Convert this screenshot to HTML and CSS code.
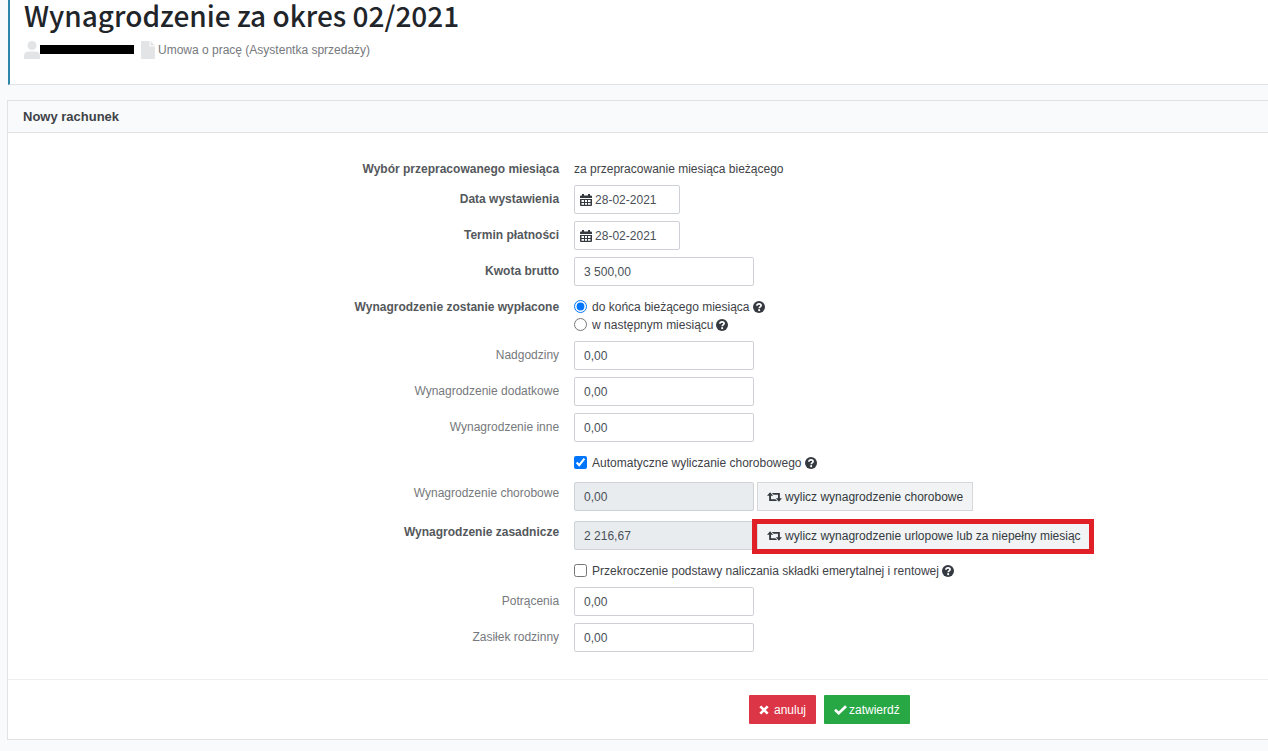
FILE: index.html
```html
<!DOCTYPE html>
<html lang="pl">
<head>
    <meta charset="utf-8">
    <title>Wynagrodzenie za okres 02/2021</title>
    <meta name="viewport" content="width=device-width, initial-scale=1">
    <link rel="stylesheet" href="styles.css">
</head>
<body>
    <!-- icons shared by the form -->
    <svg class="sprite" aria-hidden="true">
        <symbol id="calendar" viewBox="0 0 12 12"><path d="M2 0h2v1.500h4V0h2v1.500h1a1 1 0 0 1 1 1V4H0V2.500a1 1 0 0 1 1-1h1zM0 5h12v6a1 1 0 0 1-1 1H1a1 1 0 0 1-1-1zM1.500 6v2H4V6zM5 6v2h2V6zM8 6v2h2.500V6zM1.500 9v1.700H4V9zM5 9v1.700h2V9zM8 9v1.700h2.500V9z" fill-rule="evenodd"/></symbol>
        <symbol id="help" viewBox="0 0 16 16"><circle cx="8" cy="8" r="8"/><path d="M5.200 6.300C5.300 4.600 6.500 3.800 8.100 3.800c1.600 0 2.700 .9 2.700 2.200 0 1.900-2.500 1.800-2.500 3.600" fill="none" stroke="#fff" stroke-width="2.300"/><circle cx="8.200" cy="12.200" r="1.400" fill="#fff"/></symbol>
        <symbol id="retweet" viewBox="0 0 16 10"><path d="M3.300 0L6.600 3.700H4.300V7.300H9L10.900 9.300H2.300V3.700H0zM12.700 10L9.400 6.300h2.300V2.700H7L5.100 .7h8.600v5.600H16z"/></symbol>
    </svg>

    <header class="page-header">
        <h1>Wynagrodzenie za okres 02/2021</h1>
        <div class="details">
            <svg class="detail-icon" viewBox="0 0 16 18" aria-hidden="true"><circle cx="8" cy="4.500" r="4.500"/><path d="M0 18v-3.500C0 12 2 10.500 4.500 10.500h7c2.500 0 4.500 1.500 4.500 4V18z"/></svg>
            <span class="redacted"></span>
            <svg class="detail-icon file" viewBox="0 0 14 18" aria-hidden="true"><path d="M1 0h7.500v5.500H14V17a1 1 0 0 1-1 1H1a1 1 0 0 1-1-1V1a1 1 0 0 1 1-1zM9.500 0L14 4.500H9.500z"/></svg>
            <span>Umowa o pracę (Asystentka sprzedaży)</span>
        </div>
    </header>

    <form class="card">
        <h2 class="card-title">Nowy rachunek</h2>

        <div class="card-body">
            <div class="row plain">
                <span class="label required">Wybór przepracowanego miesiąca</span>
                <span>za przepracowanie miesiąca bieżącego</span>
            </div>
            <div class="row">
                <label class="label required" for="issued">Data wystawienia</label>
                <div class="date">
                    <svg class="calendar" aria-hidden="true"><use href="#calendar"/></svg>
                    <input type="text" id="issued" value="28-02-2021">
                </div>
            </div>
            <div class="row">
                <label class="label required" for="due">Termin płatności</label>
                <div class="date">
                    <svg class="calendar" aria-hidden="true"><use href="#calendar"/></svg>
                    <input type="text" id="due" value="28-02-2021">
                </div>
            </div>
            <div class="row">
                <label class="label required" for="gross">Kwota brutto</label>
                <input class="field" type="text" id="gross" value="3 500,00">
            </div>
            <div class="row" role="radiogroup" aria-labelledby="payout">
                <span class="label required" id="payout">Wynagrodzenie zostanie wypłacone</span>
                <div class="options">
                    <label class="option"><input type="radio" name="payout" checked>do końca bieżącego miesiąca<svg class="help" aria-hidden="true"><use href="#help"/></svg></label>
                    <label class="option"><input type="radio" name="payout">w następnym miesiącu<svg class="help" aria-hidden="true"><use href="#help"/></svg></label>
                </div>
            </div>
            <div class="row">
                <label class="label" for="overtime">Nadgodziny</label>
                <input class="field" type="text" id="overtime" value="0,00">
            </div>
            <div class="row">
                <label class="label" for="extra">Wynagrodzenie dodatkowe</label>
                <input class="field" type="text" id="extra" value="0,00">
            </div>
            <div class="row">
                <label class="label" for="other">Wynagrodzenie inne</label>
                <input class="field" type="text" id="other" value="0,00">
            </div>
            <div class="row">
                <div class="options sick-auto">
                    <label class="option"><input type="checkbox" checked>Automatyczne wyliczanie chorobowego<svg class="help" aria-hidden="true"><use href="#help"/></svg></label>
                </div>
            </div>
            <div class="row with-button">
                <label class="label" for="sick">Wynagrodzenie chorobowe</label>
                <div class="group">
                    <input class="field" type="text" id="sick" value="0,00" readonly>
                    <button class="calc" type="button"><svg class="retweet" aria-hidden="true"><use href="#retweet"/></svg>wylicz wynagrodzenie chorobowe</button>
                </div>
            </div>
            <div class="row with-button">
                <label class="label required" for="base">Wynagrodzenie zasadnicze</label>
                <div class="group">
                    <input class="field" type="text" id="base" value="2 216,67" readonly>
                    <button class="calc marked" type="button"><svg class="retweet" aria-hidden="true"><use href="#retweet"/></svg>wylicz wynagrodzenie urlopowe lub za niepełny miesiąc</button>
                </div>
            </div>
            <div class="row">
                <div class="options limit">
                    <label class="option"><input type="checkbox">Przekroczenie podstawy naliczania składki emerytalnej i rentowej<svg class="help" aria-hidden="true"><use href="#help"/></svg></label>
                </div>
            </div>
            <div class="row">
                <label class="label" for="deductions">Potrącenia</label>
                <input class="field" type="text" id="deductions" value="0,00">
            </div>
            <div class="row">
                <label class="label" for="family">Zasiłek rodzinny</label>
                <input class="field" type="text" id="family" value="0,00">
            </div>
        </div>

        <div class="card-footer">
            <button class="button cancel" type="button"><svg width="10" height="10" viewBox="0 0 10 10" aria-hidden="true"><path d="M1.300 1.300l7.400 7.400M8.700 1.300L1.300 8.700" fill="none" stroke="#fff" stroke-width="2.600"/></svg>anuluj</button>
            <button class="button confirm" type="submit"><svg width="13" height="10" viewBox="0 0 13 10" aria-hidden="true"><path d="M1 4.800l3.700 3.400L12 1.200" fill="none" stroke="#fff" stroke-width="2.700"/></svg>zatwierdź</button>
        </div>
    </form>
</body>
</html>
```

FILE: styles.css
```css
* {
    box-sizing: border-box;
}
body {
    font-family: "Liberation Sans", Arial, sans-serif;
    font-size: 12px;
    line-height: 18px;
    color: #3e4247;
    margin: 0;
    padding: 0 0 11px 7px;
    background: #f9fafc;
}
.sprite {
    display: none;
}
.page-header {
    background: white;
    border-left: 2px solid #2e86ab;
    border-bottom: 1px solid #e0e2e4;
    padding: 0 14px 25px;
    margin: 0 0 15px 1px;
}
h1 {
    font-family: "Noto Sans CJK SC", "Open Sans", sans-serif;
    font-size: 28px;
    line-height: 30px;
    font-weight: 500;
    color: #212529;
    margin: 0;
}
.details {
    display: flex;
    align-items: center;
    padding-top: 10px;
    height: 29px;
    color: #76797d;
}
.detail-icon {
    width: 16px;
    height: 18px;
    fill: #e3e4e5;
}
.redacted {
    width: 94px;
    height: 9px;
    margin-right: 7px;
    background: black;
}
.file {
    width: 14px;
    margin-right: 3px;
}
.card {
    background: white;
    border: 1px solid #e0e2e4;
    border-right: none;
}
.card-title {
    font-size: 13px;
    line-height: 31px;
    color: #3e4247;
    margin: 0;
    padding: 0 15px;
    background: #f9fafc;
    border-bottom: 1px solid #e0e2e4;
}
.card-body {
    padding: 27px 2px 20px 0;
}
.row {
    display: grid;
    grid-template-columns: 45% 1fr;
    align-items: start;
    justify-items: start;
    margin-bottom: 7px;
}
.label {
    justify-self: end;
    padding: 5px 15px 0 0;
    color: #76797d;
}
.required {
    font-weight: bold;
    color: #54585c;
}
.plain .label {
    padding-top: 0;
}
.field,
.date {
    height: 29px;
    border: 1px solid #ced2d6;
    border-radius: 2px;
    background: white;
}
.field {
    width: 180px;
    padding: 0 9px;
    font: inherit;
    color: #495057;
}
.field[readonly] {
    background: #e9ecef;
}
.date {
    display: flex;
    align-items: center;
    width: 106px;
    padding-left: 5px;
}
.date input {
    width: 80px;
    border: none;
    padding: 0 0 0 3px;
    font: inherit;
    color: #495057;
    background: none;
}
.calendar {
    width: 12px;
    height: 12px;
    fill: #343a40;
}
.options {
    grid-column: 2;
    padding-top: 5px;
}
.sick-auto {
    padding-bottom: 3px;
}
.limit {
    padding-top: 2px;
}
.option {
    display: flex;
    align-items: center;
    height: 18px;
}
.option input {
    width: 13px;
    height: 13px;
    margin: 0 5px 1px 0;
}
.help {
    width: 12px;
    height: 12px;
    margin-left: 3px;
    fill: #343a40;
}
.with-button {
    margin-bottom: 10px;
}
.with-button .label {
    padding-top: 2px;
}
.group {
    display: flex;
    gap: 3px;
}
.calc {
    position: relative;
    display: flex;
    align-items: center;
    height: 29px;
    padding: 0 9px;
    font: inherit;
    color: #343a40;
    white-space: nowrap;
    background: #f1f3f5;
    border: 1px solid #d5d8db;
}
/* frame drawn over the button */
.marked::after {
    content: "";
    position: absolute;
    inset: -3px -4px -5px -6px;
    border: 5px solid #e01f26;
}
.retweet {
    width: 15px;
    height: 10px;
    margin-right: 3px;
    fill: #343a40;
}
.card-footer {
    display: flex;
    gap: 8px;
    padding: 15px 0 15px calc(45% + 174px);
    border-top: 1px solid #eeeff0;
}
.button {
    display: flex;
    align-items: center;
    height: 29px;
    padding: 0 10px;
    border: none;
    border-radius: 1px;
    font: inherit;
    color: white;
    cursor: pointer;
}
.cancel {
    gap: 5px;
    background: #dc3545;
}
.confirm {
    gap: 2px;
    background: #28a745;
}
```
